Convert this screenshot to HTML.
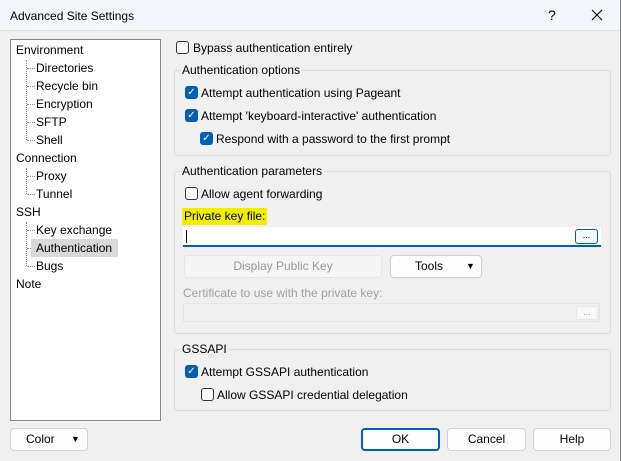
<!DOCTYPE html><html><head><style>
*{box-sizing:border-box}
body{margin:0;width:621px;height:461px;background:#f0f0f0;font-family:"Liberation Sans",sans-serif;font-size:12px;color:#000;position:relative;overflow:hidden}
.a{position:absolute;white-space:nowrap}
.tb{left:0;top:0;width:621px;height:31px;background:#f3f6fa;border-bottom:1px solid #e6e6e6}
.tree{left:10px;top:39px;width:151px;height:382px;background:#fff;border:1px solid #828790}
.cb{width:13px;height:13px;border:1px solid #333;border-radius:3px;background:#fff}
.cc{width:13px;height:13px;border-radius:3px;background:#005fb8;color:#fff;font-size:10px;line-height:13px;text-align:center}
.grp{border:1px solid #dcdcdc;border-radius:3px}
.gt{background:#f0f0f0;padding:0 2px}
.btn{border:1px solid #d0d0d0;border-radius:4px;background:#fdfdfd;text-align:center;line-height:21px}
.dl{border-left:1px dotted #888}
.dh{border-top:1px dotted #888;width:8px}
</style></head><body>
<div class="a tb"></div>
<div class="a" style="left:10px;top:9px;font-size:12px">Advanced Site Settings</div>
<div class="a" style="left:548px;top:7px;font-size:14px">?</div>
<svg class="a" style="left:591px;top:9px" width="12" height="12"><path d="M1 1L11 11M11 1L1 11" stroke="#000" stroke-width="1.1"/></svg>
<div class="a tree"></div>
<div class="a dl" style="left:26px;top:60px;height:80px"></div>
<div class="a dl" style="left:26px;top:168px;height:26px"></div>
<div class="a dl" style="left:26px;top:222px;height:44px"></div>
<div class="a dh" style="left:27px;top:68px"></div><div class="a dh" style="left:27px;top:86px"></div><div class="a dh" style="left:27px;top:104px"></div><div class="a dh" style="left:27px;top:122px"></div><div class="a dh" style="left:27px;top:140px"></div>
<div class="a dh" style="left:27px;top:176px"></div><div class="a dh" style="left:27px;top:194px"></div>
<div class="a dh" style="left:27px;top:230px"></div><div class="a dh" style="left:27px;top:248px"></div><div class="a dh" style="left:27px;top:266px"></div>
<div class="a" style="left:31px;top:239px;width:87px;height:18px;background:#d9d9d9"></div>
<div class="a" style="left:16px;top:41px;line-height:18px">Environment<br>&nbsp;&nbsp;&nbsp;&nbsp;&nbsp;&nbsp;Directories<br>&nbsp;&nbsp;&nbsp;&nbsp;&nbsp;&nbsp;Recycle bin<br>&nbsp;&nbsp;&nbsp;&nbsp;&nbsp;&nbsp;Encryption<br>&nbsp;&nbsp;&nbsp;&nbsp;&nbsp;&nbsp;SFTP<br>&nbsp;&nbsp;&nbsp;&nbsp;&nbsp;&nbsp;Shell<br>Connection<br>&nbsp;&nbsp;&nbsp;&nbsp;&nbsp;&nbsp;Proxy<br>&nbsp;&nbsp;&nbsp;&nbsp;&nbsp;&nbsp;Tunnel<br>SSH<br>&nbsp;&nbsp;&nbsp;&nbsp;&nbsp;&nbsp;Key exchange<br>&nbsp;&nbsp;&nbsp;&nbsp;&nbsp;&nbsp;Authentication<br>&nbsp;&nbsp;&nbsp;&nbsp;&nbsp;&nbsp;Bugs<br>Note</div>

<div class="a cb" style="left:176px;top:41px"></div><div class="a" style="left:193px;top:41px">Bypass authentication entirely</div>

<div class="a grp" style="left:174px;top:70px;width:437px;height:86px"></div>
<div class="a gt" style="left:180px;top:63px">Authentication options</div>
<div class="a cc" style="left:185px;top:86px">✓</div><div class="a" style="left:201px;top:86px">Attempt authentication using Pageant</div>
<div class="a cc" style="left:185px;top:109px">✓</div><div class="a" style="left:201px;top:109px">Attempt 'keyboard-interactive' authentication</div>
<div class="a cc" style="left:200px;top:132px">✓</div><div class="a" style="left:216px;top:132px">Respond with a password to the first prompt</div>

<div class="a grp" style="left:174px;top:171px;width:437px;height:163px"></div>
<div class="a gt" style="left:180px;top:164px">Authentication parameters</div>
<div class="a cb" style="left:185px;top:187px"></div><div class="a" style="left:201px;top:187px">Allow agent forwarding</div>
<div class="a" style="left:182px;top:208px;background:#f2ee00;padding:0 2px;height:17px;line-height:17px">Private key file:</div>
<div class="a" style="left:183px;top:227px;width:418px;height:20px;background:#fff;border-bottom:2px solid #005fb8"></div>
<div class="a" style="left:186px;top:230px;width:1px;height:13px;background:#000"></div>
<div class="a" style="left:575px;top:229px;width:23px;height:15px;border:1px solid #005fb8;border-radius:3px;background:#f4f8fc;font-size:9px;text-align:center;line-height:11px">...</div>
<div class="a btn" style="left:184px;top:255px;width:198px;height:23px;color:#999;background:#f5f5f5;border-color:#e6e6e6">Display Public Key</div>
<div class="a btn" style="left:390px;top:255px;width:92px;height:23px;text-align:left;padding-left:24px">Tools<span style="position:absolute;left:75px;font-size:9px">▼</span></div>
<div class="a" style="left:183px;top:286px;color:#a0a0a0">Certificate to use with the private key:</div>
<div class="a" style="left:183px;top:303px;width:417px;height:19px;border:1px solid #e3e3e3;background:#f0f0f0"></div>
<div class="a" style="left:576px;top:306px;width:22px;height:14px;border:1px solid #e6e6e6;border-radius:3px;background:#f7f7f7;font-size:9px;color:#999;text-align:center;line-height:10px">...</div>

<div class="a grp" style="left:174px;top:349px;width:437px;height:62px"></div>
<div class="a gt" style="left:180px;top:342px">GSSAPI</div>
<div class="a cc" style="left:185px;top:365px">✓</div><div class="a" style="left:201px;top:365px">Attempt GSSAPI authentication</div>
<div class="a cb" style="left:201px;top:388px"></div><div class="a" style="left:217px;top:388px">Allow GSSAPI credential delegation</div>

<div class="a btn" style="left:10px;top:428px;width:78px;height:23px;text-align:left;padding-left:15px">Color<span style="position:absolute;left:60px;font-size:9px">▼</span></div>
<div class="a btn" style="left:361px;top:428px;width:79px;height:23px;border:2px solid #005fb8;line-height:19px">OK</div>
<div class="a btn" style="left:447px;top:428px;width:79px;height:23px">Cancel</div>
<div class="a btn" style="left:533px;top:428px;width:78px;height:23px">Help</div>
<div class="a" style="left:620px;top:0;width:1px;height:461px;background:#888"></div>
</body></html>
